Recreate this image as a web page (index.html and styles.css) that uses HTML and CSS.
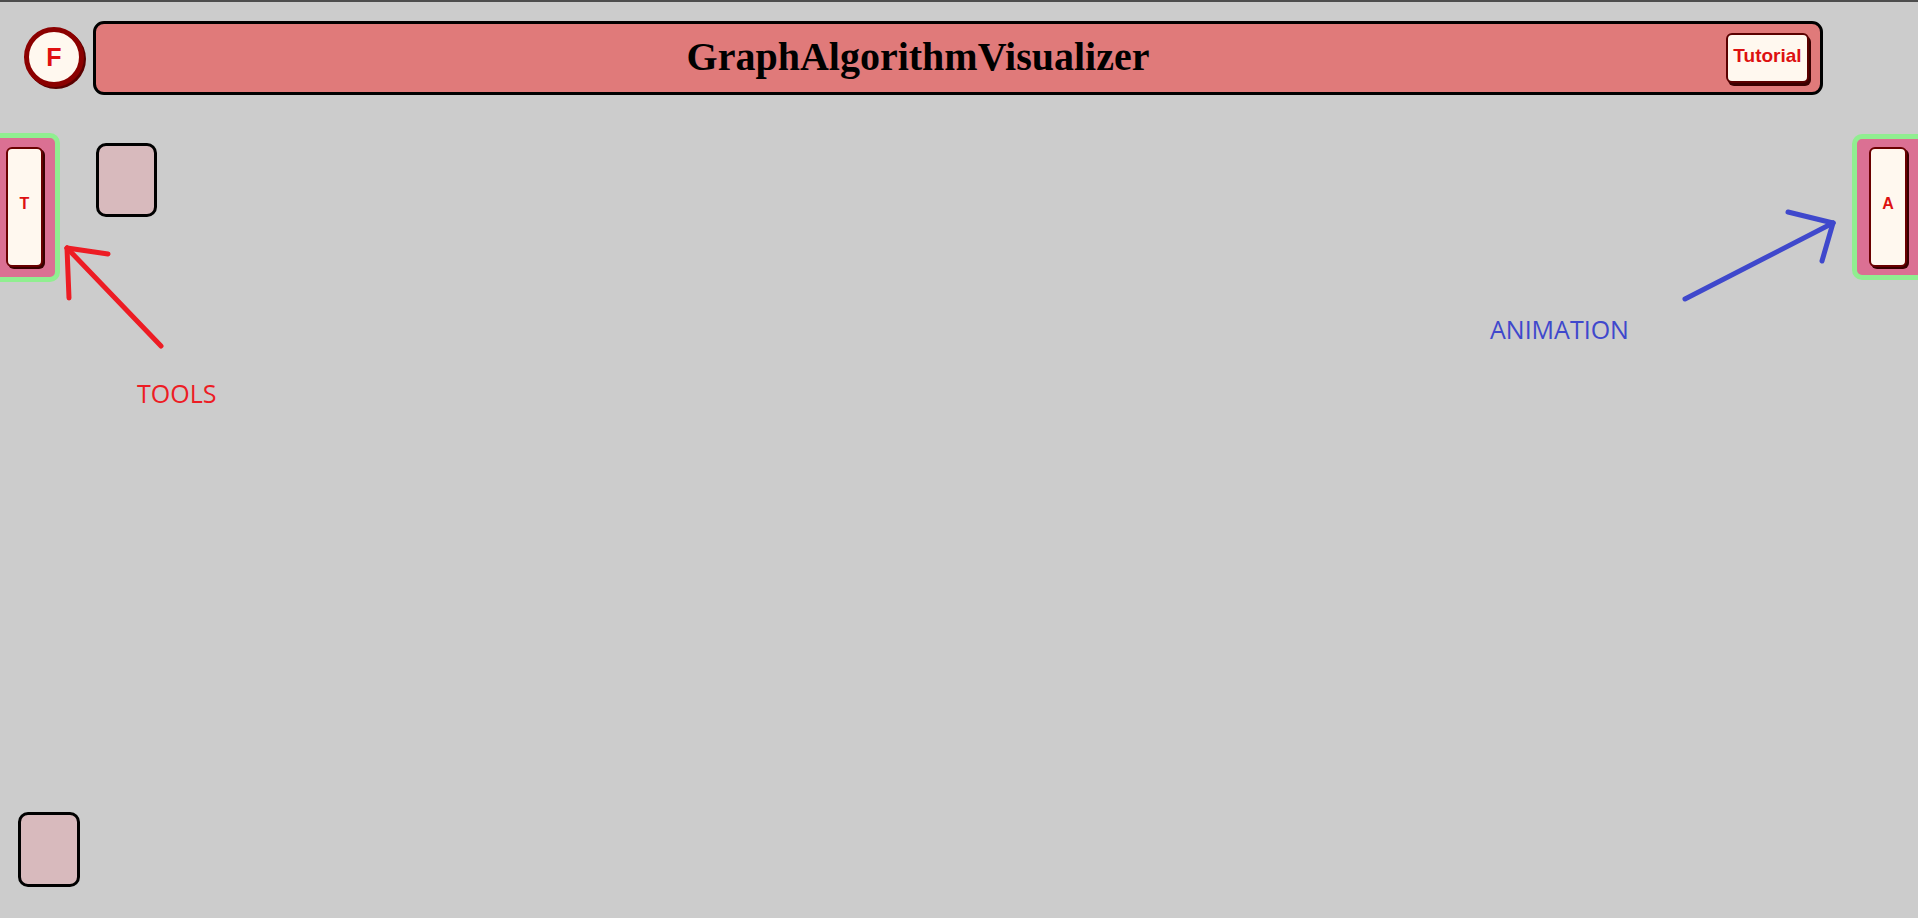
FILE: index.html
```html
<!DOCTYPE html>
<html lang="en">
<head>
<meta charset="utf-8">
<title>GraphAlgorithmVisualizer</title>
<link rel="stylesheet" href="styles.css">
</head>
<body>
<div class="app">
  <header class="topbar">
    <button class="logo">F</button>
    <div class="titlebar">
      <h1 class="title">GraphAlgorithmVisualizer</h1>
      <button class="tutorial">Tutorial</button>
    </div>
  </header>
  <main class="workspace">
    <aside class="panel panel-left">
      <button class="panel-btn">T</button>
    </aside>
    <div class="tile tile-top"></div>
    <aside class="panel panel-right">
      <button class="panel-btn">A</button>
    </aside>
  </main>
  <footer class="bottom">
    <div class="tile"></div>
  </footer>
</div>
<svg class="annotations" width="1918" height="918" viewBox="0 0 1918 918">
  <g class="arrow-red">
    <line x1="161" y1="346" x2="67" y2="248"/>
    <line x1="67" y1="248" x2="108" y2="254"/>
    <line x1="67" y1="248" x2="69" y2="298"/>
  </g>
  <text class="label-red" x="137" y="403">TOOLS</text>
  <g class="arrow-blue">
    <line x1="1685" y1="299" x2="1833" y2="223"/>
    <line x1="1833" y1="223" x2="1788" y2="212"/>
    <line x1="1833" y1="223" x2="1822" y2="261"/>
  </g>
  <text class="label-blue" x="1490" y="339">ANIMATION</text>
</svg>
</body>
</html>
```
FILE: styles.css
```css
* { box-sizing: border-box; }

html, body {
  margin: 0;
  padding: 0;
  height: 100%;
}

body {
  background: #cccccc;
  border-top: 2px solid #4d4d4d;
  overflow: hidden;
  font-family: "Liberation Sans", Arial, sans-serif;
  position: relative;
}

.app {
  height: 916px;
  display: flex;
  flex-direction: column;
}

.topbar {
  display: flex;
  align-items: flex-start;
  padding: 19px 95px 0 24px;
  gap: 9px;
}

.logo {
  width: 60px;
  height: 60px;
  margin-top: 6px;
  border-radius: 50%;
  border: 5px solid #8b0000;
  background: #fff8ef;
  box-shadow: 2px 2px 0 #5a0000;
  color: #e01010;
  font: bold 25px "Liberation Sans", Arial, sans-serif;
  padding: 0;
  display: flex;
  align-items: center;
  justify-content: center;
}

.titlebar {
  flex: 1;
  height: 74px;
  display: flex;
  align-items: center;
  background: #e07a7a;
  border: 3px solid #000;
  border-radius: 11px;
  padding-right: 11px;
}

.title {
  flex: 1;
  margin: 0;
  text-align: center;
  font: bold 40px "Liberation Serif", "Times New Roman", serif;
  color: #000;
  padding-left: 14px;
  padding-bottom: 4px;
}

.tutorial {
  width: 83px;
  height: 50px;
  background: #fff8ef;
  border: 2px solid #5a0000;
  border-radius: 6px;
  box-shadow: 2px 3px 0 #3a0000;
  color: #dd1111;
  font: bold 19px "Liberation Sans", Arial, sans-serif;
  padding: 0 0 4px;
}

.workspace {
  flex: 1;
  display: flex;
  align-items: flex-start;
  margin-top: 38px;
}

.panel {
  background: #db7093;
  border: 5px solid #90ee90;
  border-radius: 10px;
  padding-top: 9px;
  padding-bottom: 10px;
}

.panel-left {
  margin-left: -20px;
  padding-left: 21px;
  padding-right: 12px;
}

.panel-right {
  margin-left: auto;
  margin-right: -14px;
  margin-top: 1px;
  padding-left: 12px;
  padding-right: 20px;
  height: 146px;
  padding-top: 8px;
}

.panel-btn {
  display: block;
  width: 37px;
  height: 120px;
  background: #fff8ef;
  border: 2px solid #6a0000;
  border-radius: 6px;
  box-shadow: 2px 2px 0 #3a0000;
  color: #dd1111;
  font: bold 16px "Liberation Sans", Arial, sans-serif;
  padding: 0 0 6px;
}

.panel-right .panel-btn {
  width: 38px;
}

.tile {
  width: 62px;
  height: 75px;
  background: #d8babd;
  border: 3px solid #000;
  border-radius: 10px;
}

.tile-top {
  margin-left: 36px;
  margin-top: 10px;
  width: 61px;
  height: 74px;
}

.bottom {
  padding: 0 0 31px 18px;
}

.annotations {
  position: absolute;
  left: 0;
  top: -2px;
  pointer-events: none;
}

.arrow-red line,
.arrow-blue line {
  stroke-width: 5;
  stroke-linecap: round;
}

.arrow-red line { stroke: #ed1c24; }
.arrow-blue line { stroke: #3f48cc; }

.label-red,
.label-blue {
  font-family: "Open Sans", "Noto Sans", sans-serif;
  font-size: 25px;
}

.label-red { fill: #ed1c24; }
.label-blue { fill: #3f48cc; }
```
